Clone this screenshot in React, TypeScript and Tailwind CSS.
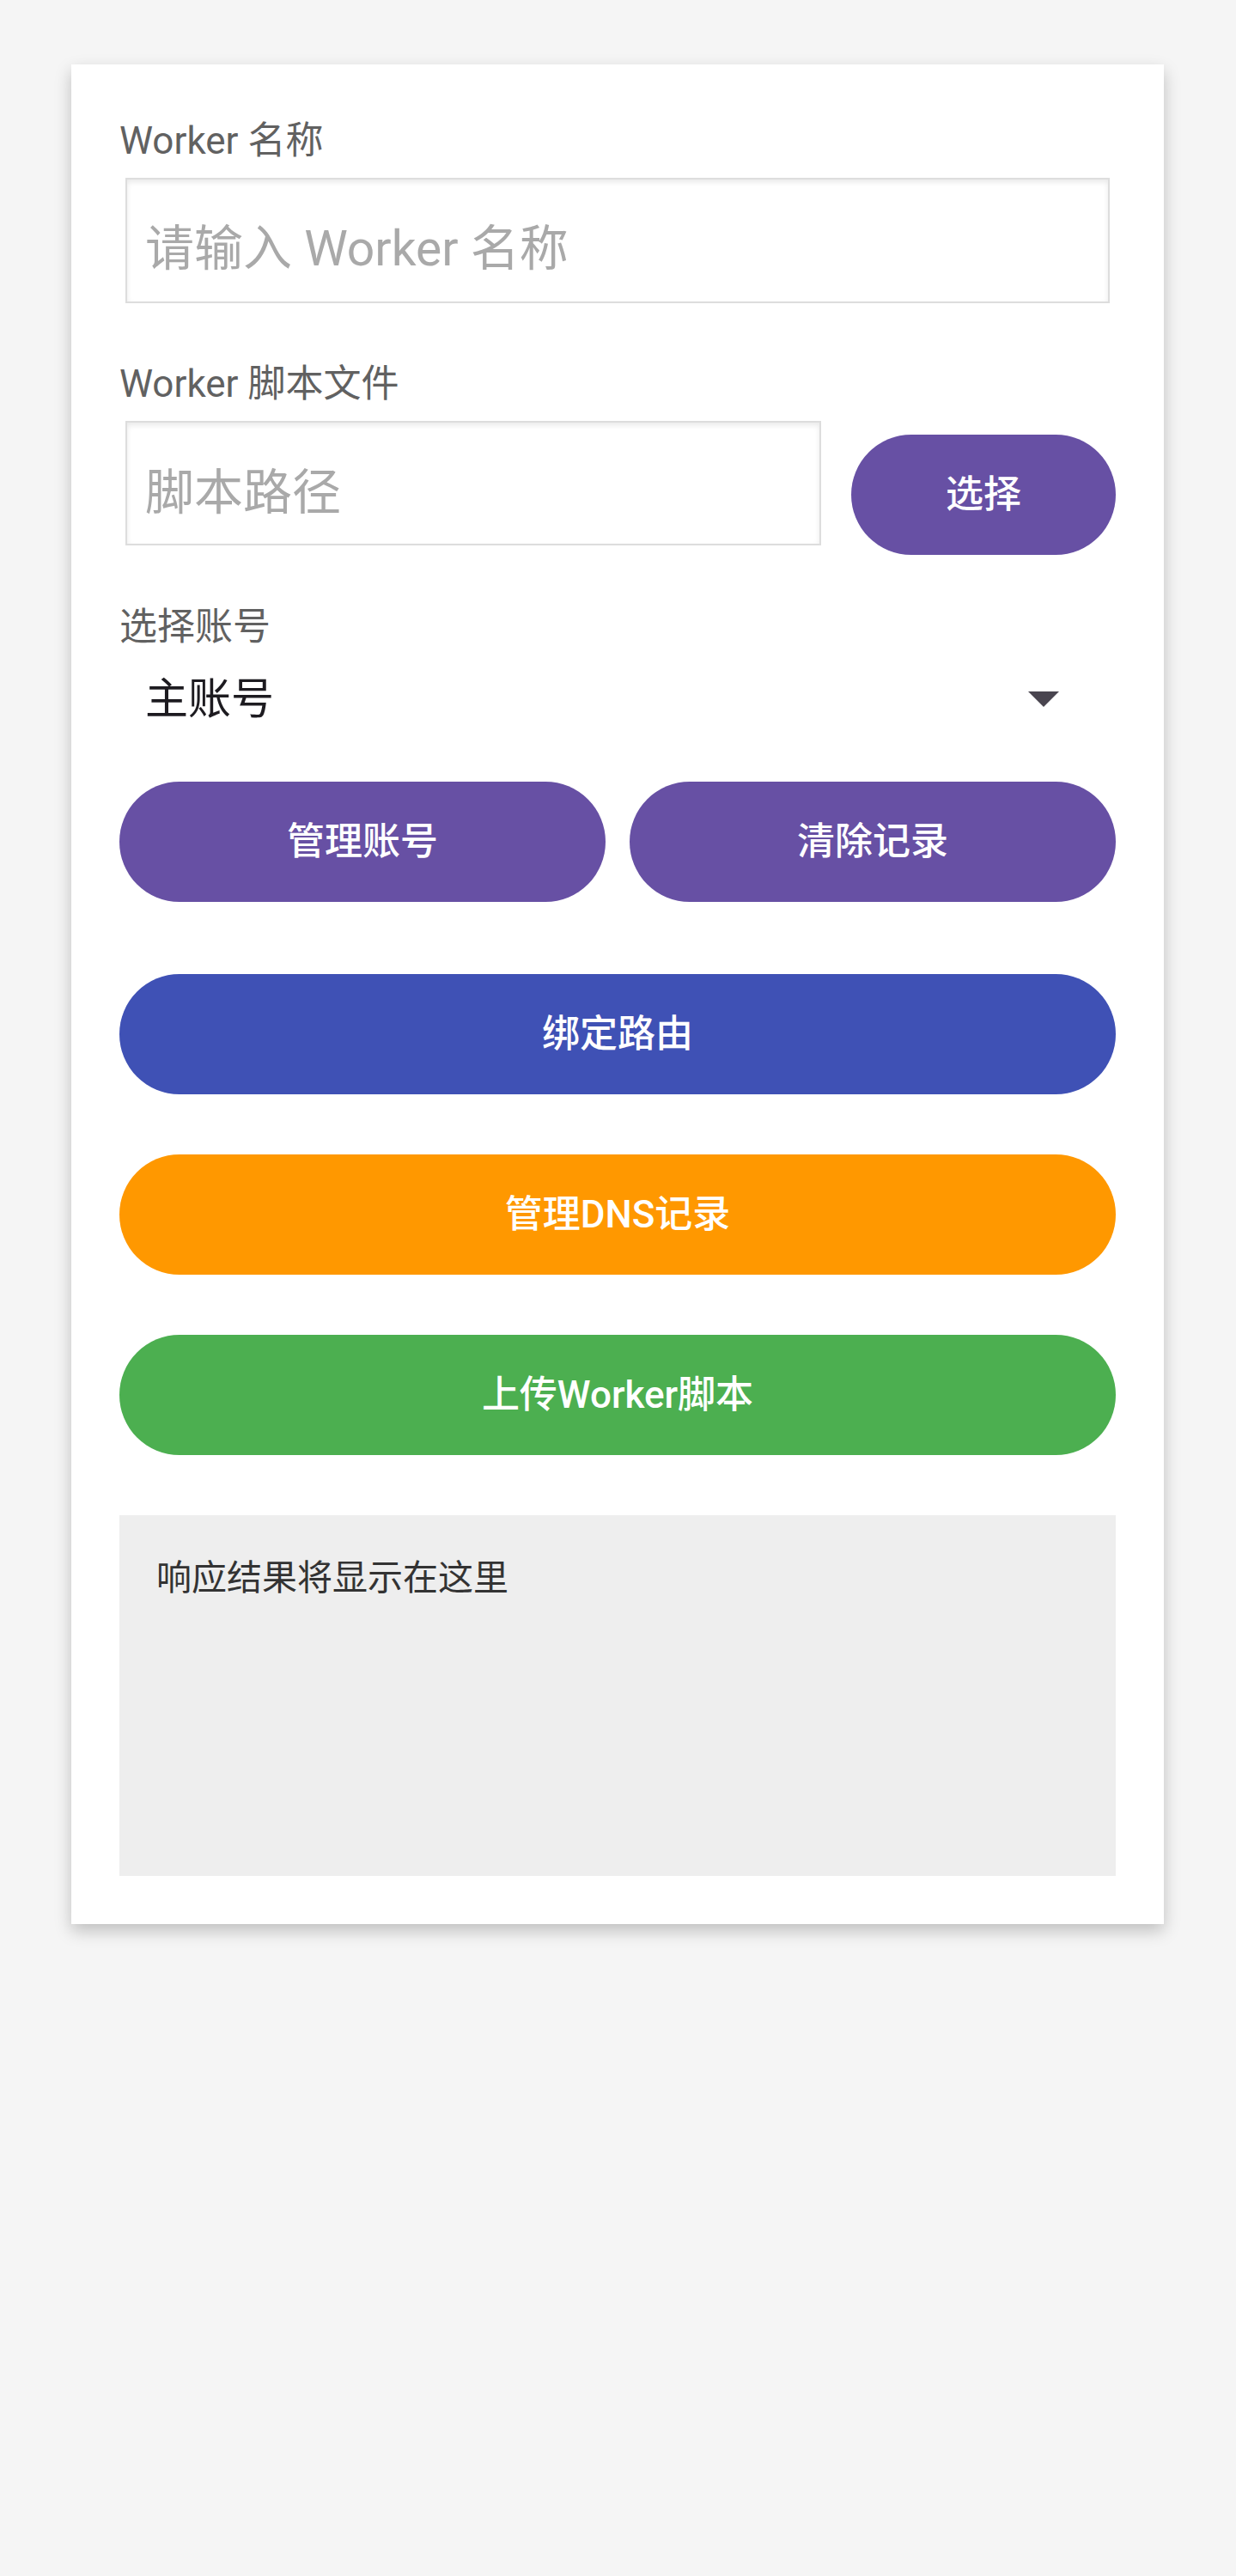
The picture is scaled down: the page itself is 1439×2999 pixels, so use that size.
const fontStack = "font-['Roboto','Noto_Sans_CJK_SC',sans-serif]";

const PillButton = ({ label, color, className = '' }: { label: string; color: string; className?: string }) => (
    <button className={`${color} ${className} h-[140px] rounded-full text-white text-[44px] font-medium flex items-center justify-center`}>
        {label}
    </button>
);

export default function App() {
    return (
        <div className={`min-h-screen w-full bg-[#f5f5f5] pt-[75px] ${fontStack}`}>
            <main className="w-[1272px] ml-[83px] bg-white p-[56px] shadow-[0_8px_18px_rgba(0,0,0,0.22)]">
                {/* Worker name */}
                <label className="block text-[44px] leading-[66px] text-[#616161]">Worker 名称</label>
                <input
                    className="block mt-[10px] mx-[7px] w-[1146px] h-[146px] border-2 border-[#dddddd] shadow-[inset_0_3px_6px_rgba(0,0,0,0.09)] pl-[21px] pt-[19px] text-[57px] text-[#212121] placeholder:text-[#a9a9a9] outline-none"
                    placeholder="请输入 Worker 名称"
                />

                {/* Script file */}
                <label className="block mt-[61px] text-[44px] leading-[66px] text-[#616161]">Worker 脚本文件</label>
                <div className="flex items-start">
                    <input
                        className="block mt-[10px] ml-[7px] w-[810px] h-[145px] border-2 border-[#dddddd] shadow-[inset_0_3px_6px_rgba(0,0,0,0.09)] pl-[21px] pt-[21px] text-[57px] text-[#212121] placeholder:text-[#a9a9a9] outline-none"
                        placeholder="脚本路径"
                    />
                    <PillButton label="选择" color="bg-[#6750a4]" className="ml-[35px] mt-[26px] w-[308px]" />
                </div>

                {/* Account */}
                <label className="block mt-[51px] text-[44px] leading-[66px] text-[#616161]">选择账号</label>
                <div className="mt-[11px] h-[80px] flex items-center justify-between pl-[30px] pr-[66px]">
                    <span className="text-[50px] text-[#1d1b20]">主账号</span>
                    <svg width="36" height="18" viewBox="0 0 36 18">
                        <polygon points="0,0 36,0 18,18" fill="#49454f" />
                    </svg>
                </div>

                <div className="mt-[56px] flex gap-[28px]">
                    <PillButton label="管理账号" color="bg-[#6750a4]" className="flex-1" />
                    <PillButton label="清除记录" color="bg-[#6750a4]" className="flex-1" />
                </div>

                <PillButton label="绑定路由" color="bg-[#3f51b5]" className="mt-[84px] w-full" />
                <PillButton label="管理DNS记录" color="bg-[#ff9800]" className="mt-[70px] w-full" />
                <PillButton label="上传Worker脚本" color="bg-[#4caf50]" className="mt-[70px] w-full" />

                {/* Response output */}
                <div className="mt-[70px] h-[420px] bg-[#eeeeee] pl-[43px] pt-[43px] text-[41px] leading-[60px] text-[#333333]">
                    响应结果将显示在这里
                </div>
            </main>
        </div>
    );
}
